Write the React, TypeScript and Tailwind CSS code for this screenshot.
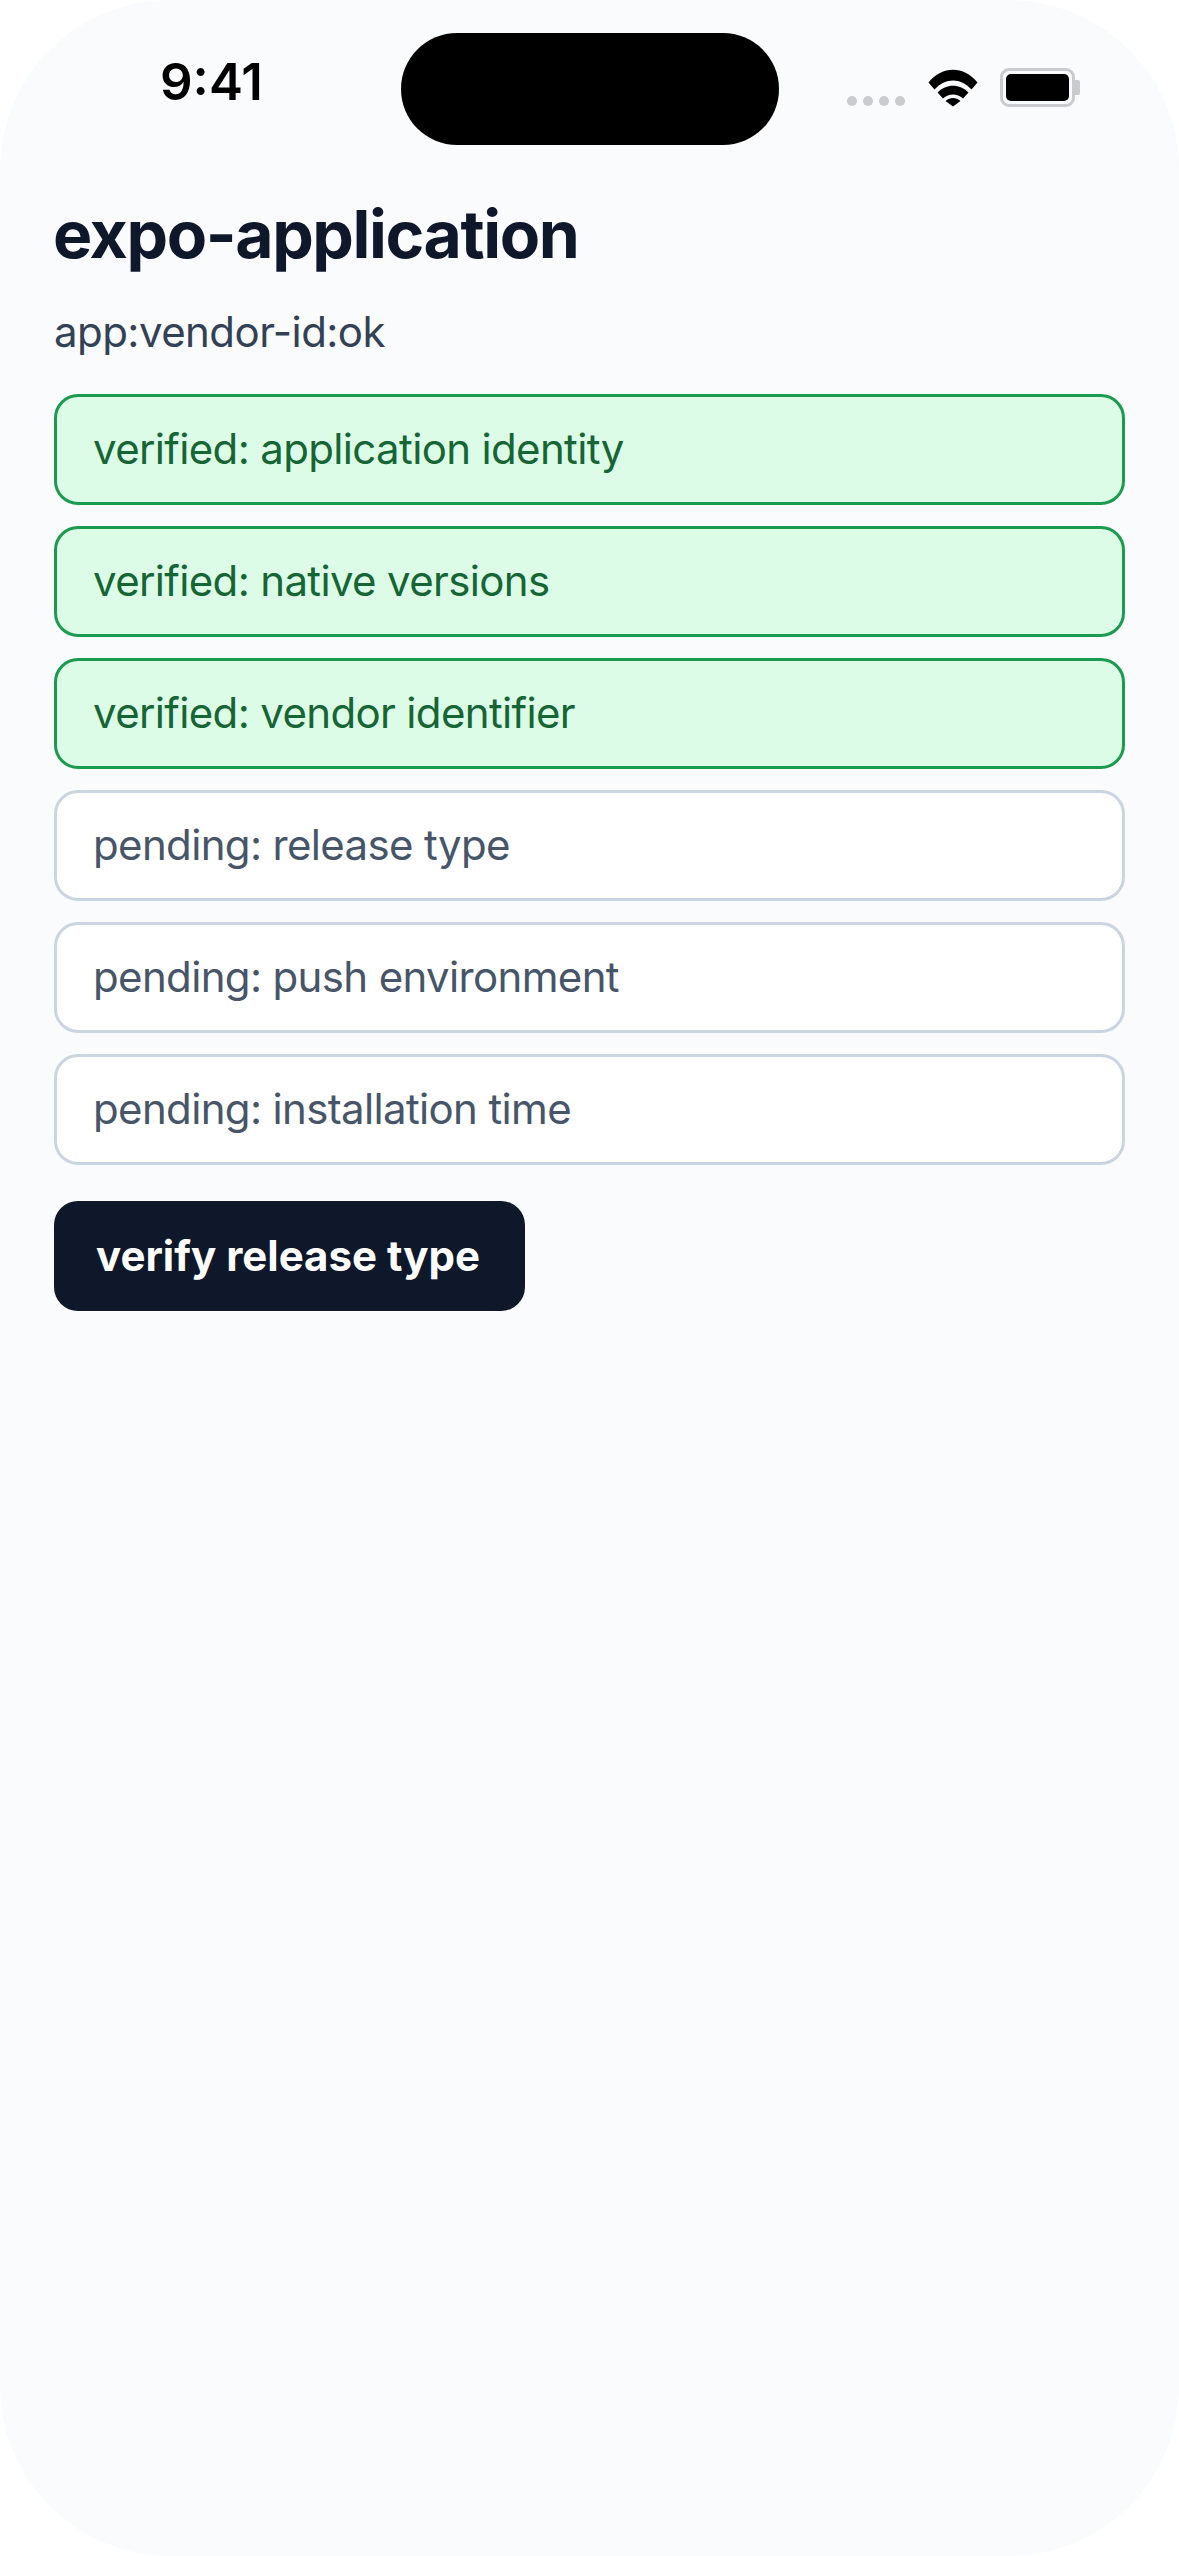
import React from "react";

const font = { fontFamily: "Inter, sans-serif" };

const rows = [
  { label: "verified: application identity", done: true },
  { label: "verified: native versions", done: true },
  { label: "verified: vendor identifier", done: true },
  { label: "pending: release type", done: false },
  { label: "pending: push environment", done: false },
  { label: "pending: installation time", done: false },
];

function Wifi() {
  return (
    <svg width="50" height="38" viewBox="0 0 50 38" className="block">
      <path d="M0.5 13.5 C14 -3.5 36 -3.5 49.5 13.5 L43.5 20.5 C32.5 8.5 17.5 8.5 6.5 20.5 Z" fill="#000" />
      <path d="M9.5 23.5 C18 14.5 32 14.5 40.5 23.5 L35 29.5 C29 24 21 24 15 29.5 Z" fill="#000" />
      <path d="M17.5 32 C22 28 28 28 32.5 32 L25 37.5 Z" fill="#000" />
    </svg>
  );
}

function Battery() {
  return (
    <div className="flex items-center">
      <div className="w-[75px] h-[39px] rounded-[9px] border-[3px] border-[#c9cbce] p-[3px]">
        <div className="w-full h-full rounded-[5px] bg-black" />
      </div>
      <div className="w-[5px] h-[15px] rounded-r-[2px] bg-[#c9cbce]" />
    </div>
  );
}

export default function App() {
  return (
    <div className="w-[1179px] h-[2556px] bg-white" style={font}>
      <div className="relative w-full h-full rounded-[170px] bg-[#f9fbfd] overflow-hidden">
        {/* status bar */}
        <div className="flex justify-between h-[198px] pl-[160px] pr-[99px]">
          <span className="mt-[54px] text-[51px] leading-[56px] font-semibold text-black">9:41</span>
          <div className="flex items-start mt-[69px]">
            <div className="flex gap-[6px] mt-[27px] mr-[23px]">
              <span className="w-[10px] h-[10px] rounded-full bg-[#c9cbce]" />
              <span className="w-[10px] h-[10px] rounded-full bg-[#c9cbce]" />
              <span className="w-[10px] h-[10px] rounded-full bg-[#c9cbce]" />
              <span className="w-[10px] h-[10px] rounded-full bg-[#c9cbce]" />
            </div>
            <Wifi />
            <div className="ml-[22px] -mt-[1px]">
              <Battery />
            </div>
          </div>
        </div>
        <div className="absolute left-[401px] top-[33px] w-[378px] h-[112px] rounded-full bg-black" />

        <div className="px-[54px]">
          <h1 className="-ml-[1px] text-[66px] leading-[72px] font-bold text-[#0f172a] tracking-[-1.4px]">expo-application</h1>
          <p className="mt-[32px] text-[42px] leading-[60px] font-[370] text-[#334155] tracking-[-0.55px]">app:vendor-id:ok</p>
          <div className="mt-[32px] flex flex-col gap-[21px]">
            {rows.map((r) => (
              <div
                key={r.label}
                className={
                  r.done
                    ? "h-[111px] flex items-center pb-[3px] px-[36px] rounded-[24px] border-[3px] border-[#1b9b50] bg-[#dcfce7] text-[#166534] text-[42px] font-[370] tracking-[-0.65px]"
                    : "h-[111px] flex items-center pb-[3px] px-[36px] rounded-[24px] border-[3px] border-[#cbd5e1] bg-white text-[#475569] text-[42px] font-[370] tracking-[-0.65px]"
                }
              >
                {r.label}
              </div>
            ))}
          </div>
          <button className="mt-[36px] block h-[110px] pb-[1px] px-[42px] w-[471px] whitespace-nowrap text-left rounded-[24px] bg-[#0f172a] text-white text-[42px] font-bold">
            verify release type
          </button>
        </div>
      </div>
    </div>
  );
}
